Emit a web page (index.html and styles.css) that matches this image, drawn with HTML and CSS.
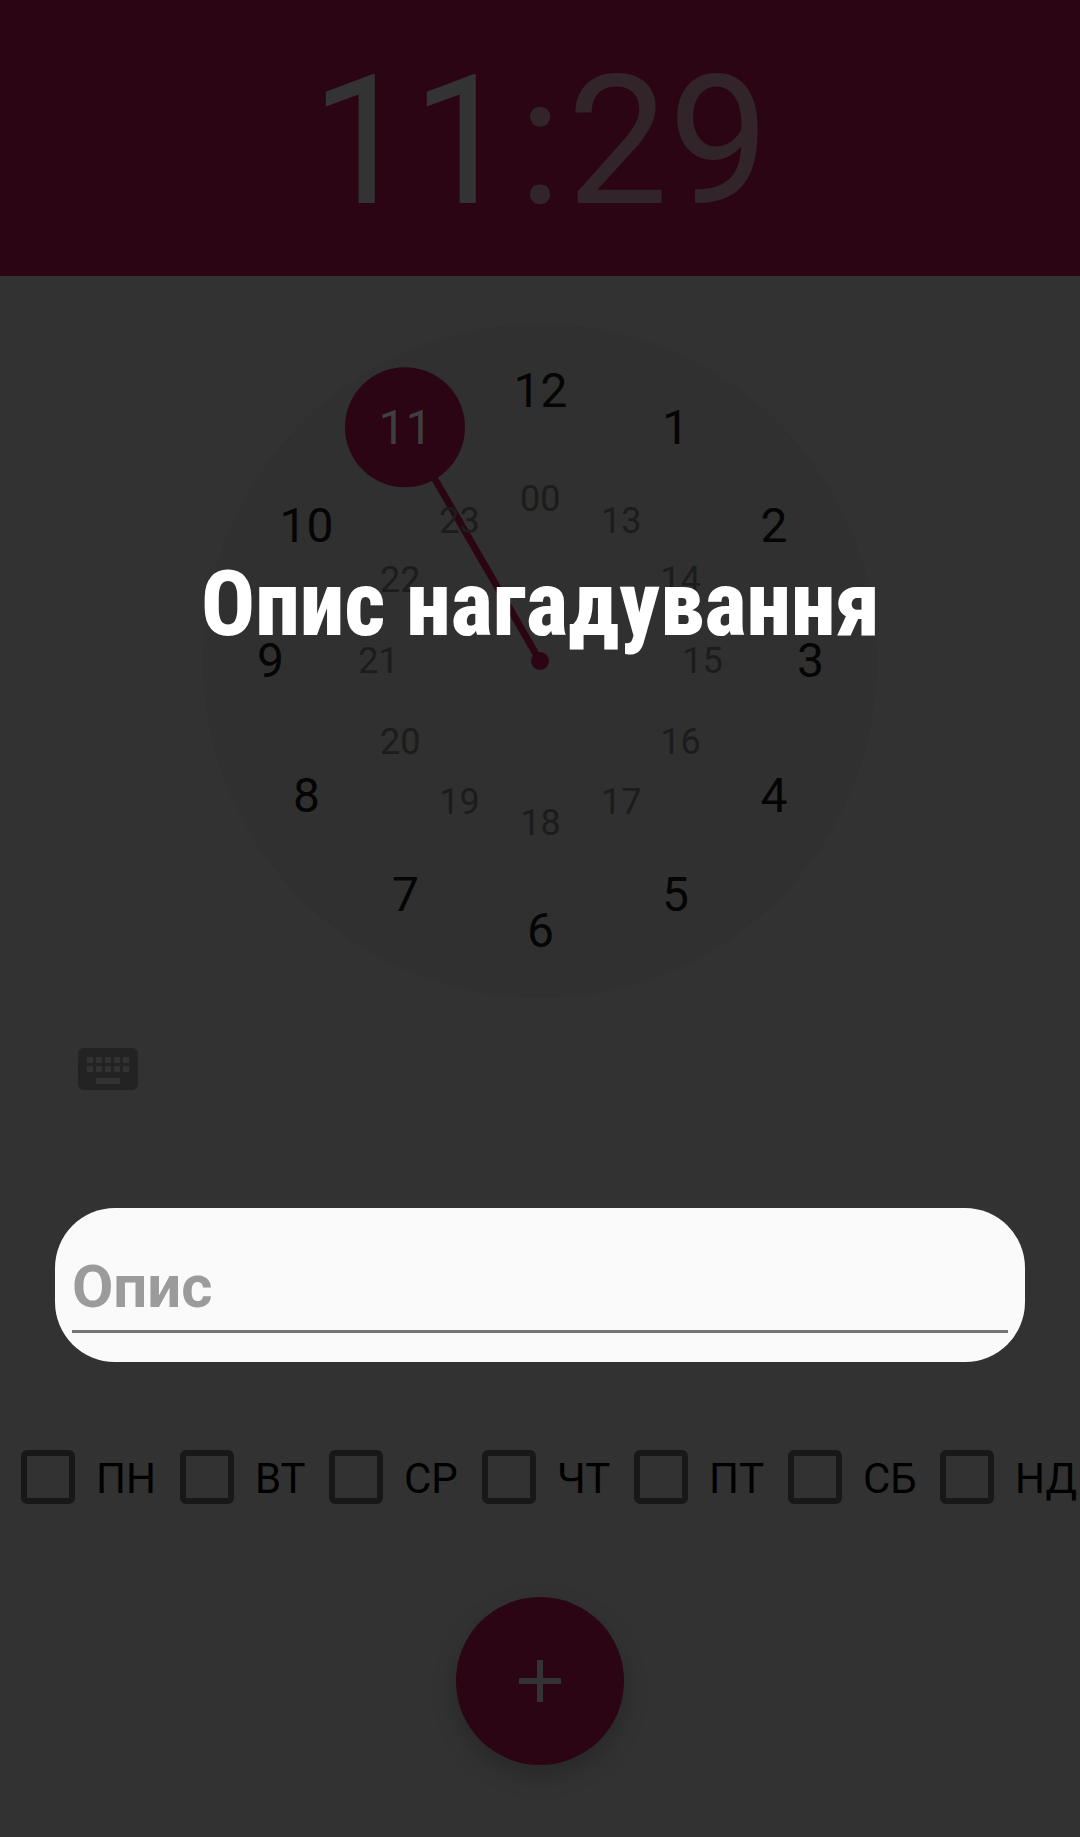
FILE: index.html
```html
<!DOCTYPE html>
<html lang="uk">
<head>
<meta charset="utf-8">
<title>Опис нагадування</title>
<link rel="stylesheet" href="styles.css">
</head>
<body>
<main class="screen">
  <header class="time">
    <span class="hours">11</span><span class="colon">:</span><span class="minutes">29</span>
  </header>

  <section class="picker">
    <svg class="clock" width="676" height="676" viewBox="-338 -338 676 676">
      <circle class="face" r="337"/>
      <line class="hand" x1="0" y1="0" x2="-135" y2="-233.8"/>
      <circle class="accent" r="9"/>
      <circle class="accent" cx="-135" cy="-233.8" r="60"/>
      <g class="outer">
        <text x="0.5" y="-254">12</text>
        <text x="135.5" y="-217">1</text>
        <text x="234" y="-119">2</text>
        <text x="270.5" y="16">3</text>
        <text x="234" y="151">4</text>
        <text x="135.5" y="250">5</text>
        <text x="0.5" y="286">6</text>
        <text x="-134.5" y="250">7</text>
        <text x="-233.5" y="151">8</text>
        <text x="-269.5" y="16">9</text>
        <text x="-233.5" y="-119">10</text>
        <text class="selected" x="-134.5" y="-217">11</text>
      </g>
      <g class="inner">
        <text x="0.3" y="-150">00</text>
        <text x="81.3" y="-128">13</text>
        <text x="140.5" y="-69">14</text>
        <text x="162.5" y="12">15</text>
        <text x="140.5" y="93">16</text>
        <text x="81.3" y="153">17</text>
        <text x="0.5" y="174">18</text>
        <text x="-80.5" y="153">19</text>
        <text x="-139.8" y="93">20</text>
        <text x="-161.5" y="12">21</text>
        <text x="-139.8" y="-69">22</text>
        <text x="-80.5" y="-128">23</text>
      </g>
    </svg>
    <h1 class="title">
      <svg width="680" height="100" viewBox="0 0 680 100">
        <text x="1" y="73" textLength="679" lengthAdjust="spacingAndGlyphs">Опис нагадування</text>
      </svg>
    </h1>
  </section>

  <svg class="keyboard" width="72" height="72" viewBox="0 0 24 24">
    <path d="M20 5H4c-1.1 0-1.99.9-1.99 2L2 17c0 1.1.9 2 2 2h16c1.1 0 2-.9 2-2V7c0-1.1-.9-2-2-2zm-9 3h2v2h-2V8zm0 3h2v2h-2v-2zM8 8h2v2H8V8zm0 3h2v2H8v-2zm-1 2H5v-2h2v2zm0-3H5V8h2v2zm9 7H8v-2h8v2zm0-4h-2v-2h2v2zm0-3h-2V8h2v2zm3 3h-2v-2h2v2zm0-3h-2V8h2v2z"/>
  </svg>

  <div class="field"><input class="input" type="text" placeholder="Опис"></div>

  <div class="days">
    <label class="day"><span class="box"></span>ПН</label>
    <label class="day"><span class="box"></span>ВТ</label>
    <label class="day"><span class="box"></span>СР</label>
    <label class="day"><span class="box"></span>ЧТ</label>
    <label class="day"><span class="box"></span>ПТ</label>
    <label class="day"><span class="box"></span>СБ</label>
    <label class="day"><span class="box"></span>НД</label>
  </div>

  <button class="fab" aria-label="Додати">
    <svg width="72" height="72" viewBox="0 0 24 24"><path d="M19 13h-6v6h-2v-6H5v-2h6V5h2v6h6v2z"/></svg>
  </button>
</main>
</body>
</html>
```
FILE: styles.css
```css
* { box-sizing: border-box; }

body {
  margin: 0;
  background: #323232;
  font-family: Roboto, sans-serif;
}

.screen {
  display: flex;
  flex-direction: column;
  width: 1080px;
  height: 1837px;
  overflow: hidden;
}

.time {
  display: flex;
  justify-content: center;
  height: 276px;
  padding-top: 37px;
  background: #2b0513;
  color: #31252a;
  font-size: 180px;
  line-height: 210px;
}

.hours { color: #333; }
.colon { width: 54px; text-align: center; }

.picker {
  position: relative;
  display: flex;
  justify-content: center;
  height: 757px;
  padding-top: 47px;
}

.clock text { text-anchor: middle; }
.face { fill: #303030; }
.accent { fill: #2b0513; }
.hand { stroke: #2b0513; stroke-width: 7; }
.outer { fill: #050505; font-size: 48px; }
.inner { fill: #1c1c1c; font-size: 36px; }
.outer .selected { fill: #3f3f3f; }

.title {
  position: absolute;
  top: 286px;
  left: 200px;
  margin: 0;
  font-size: 90px;
  font-weight: 800;
  font-stretch: 75%;
  line-height: 0;
}

.title svg { fill: #fff; overflow: visible; }

.keyboard {
  flex: none;
  margin-left: 72px;
  fill: #232323;
}

.field {
  flex: none;
  height: 154px;
  margin: 103px 55px 0;
  padding: 38px 17px 29px;
  border-radius: 60px;
  background: #fafafa;
}

.input {
  display: block;
  width: 100%;
  height: 87px;
  padding: 2px 0 5px;
  border: 0;
  border-bottom: 3px solid #757575;
  outline: 0;
  background: none;
  color: #222;
  font: bold 60px/77px Roboto, sans-serif;
}

.input::placeholder { color: #9b9b9b; opacity: 1; }

.days {
  display: grid;
  grid-template-columns: 159px 149px 153px 152px 154px 152px 161px;
  height: 54px;
  margin-top: 88px;
  color: #000;
  font-size: 42px;
  line-height: 57px;
}

.day {
  display: flex;
  gap: 21px;
  padding-left: 21px;
  white-space: nowrap;
}

.box {
  flex: none;
  width: 54px;
  height: 54px;
  border: 6px solid #181818;
  border-radius: 6px;
}

.fab {
  display: flex;
  align-items: center;
  justify-content: center;
  align-self: center;
  width: 168px;
  height: 168px;
  margin-top: 93px;
  padding: 0;
  border: 0;
  border-radius: 50%;
  background: #2b0513;
  box-shadow: 0 10px 24px rgba(0, 0, 0, .22);
}

.fab svg { fill: #333; }
```
